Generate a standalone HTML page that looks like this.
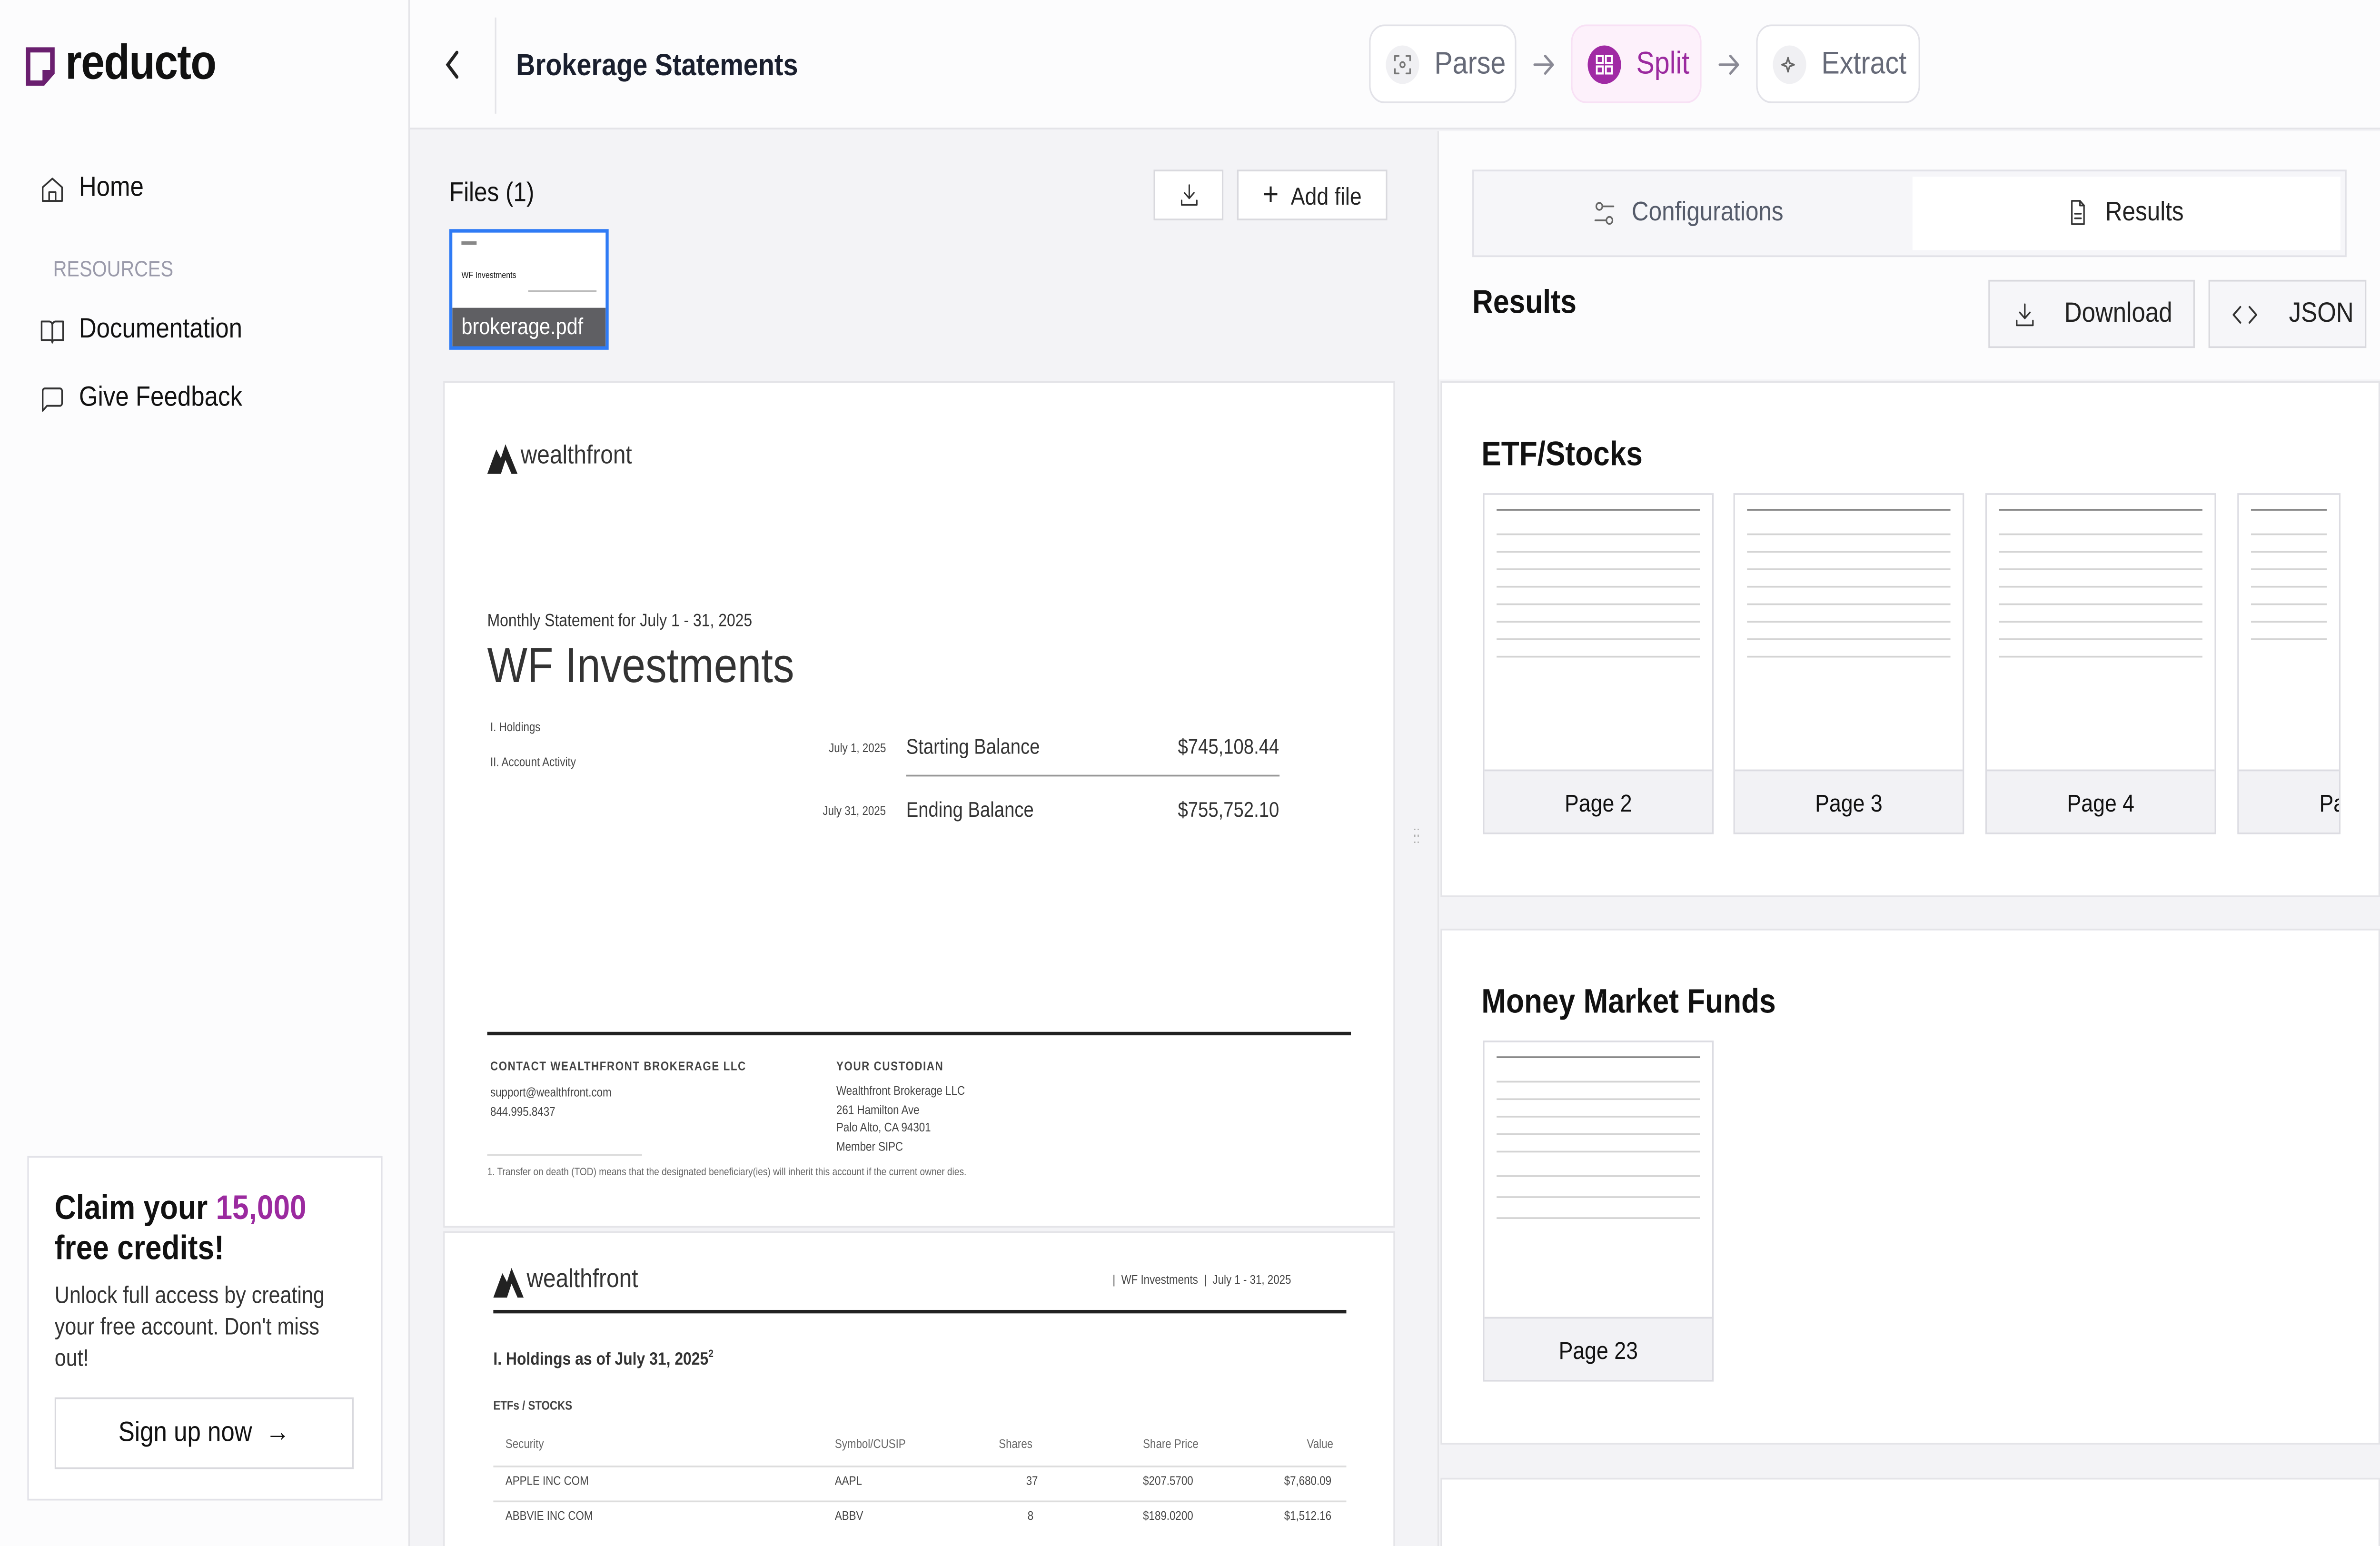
<!DOCTYPE html>
<html><head><meta charset="utf-8"><style>
*{box-sizing:border-box;margin:0;padding:0}
html,body{width:100%;height:100%;overflow:hidden;background:#f3f3f6}
svg.root{display:block;width:100vw;height:100vh}
#w{width:1568px;height:884px;position:relative;overflow:hidden;font-family:"Liberation Sans",Arial,sans-serif;color:#111;background:#f3f3f6}
.a{position:absolute}
.ico{stroke:#333;fill:none;stroke-width:1.5;stroke-linecap:round;stroke-linejoin:round}
.pill{position:absolute;top:14px;height:45px;border:1px solid #e2e2e8;border-radius:10px;background:#fff;display:flex;align-items:center;padding-left:10px;font-size:18px;color:#666a78}
.circ{width:22px;height:22px;border-radius:50%;background:#f0f0f3;display:flex;align-items:center;justify-content:center;margin-right:10px}
.btn{position:absolute;background:#fff;border:1px solid #d9d9de;display:flex;align-items:center;justify-content:center;font-size:14px;color:#222}
.line{position:absolute;height:1px;background:#ddd}
.thumb{position:absolute;width:152px;height:195px;border:1px solid #dcdce2;background:#fff;overflow:hidden}
.thumb .lab{position:absolute;left:0;right:0;bottom:0;height:36px;background:#f2f2f5;border-top:1px solid #dcdce2;text-align:center;line-height:36px;font-size:14px;color:#111}
.tl{position:absolute;height:1px;background:#d4d4d4;left:8px;right:8px}
.sm{font-size:7px;color:#444;white-space:nowrap}
</style></head><body>
<svg class="root" viewBox="0 0 1568 884" preserveAspectRatio="none" xmlns="http://www.w3.org/2000/svg"><foreignObject x="0" y="0" width="1568" height="884"><div xmlns="http://www.w3.org/1999/xhtml" id="w">
<div class="a" style="left:0;top:0;width:270px;height:884px;background:#fcfcfd;border-right:1px solid #e4e4e8">
 <svg class="a" style="left:17px;top:27px" width="20" height="22" viewBox="0 0 20 22"><path d="M1.5 1.5h16v13l-6 6h-10z" fill="none" stroke="#6a1f6f" stroke-width="3"/><path d="M11 20l7-7h-7z" fill="#6a1f6f"/></svg>
 <div class="a" style="left:43px;top:20px;font-size:28px;font-weight:bold;letter-spacing:-0.5px;color:#111">reducto</div>
 <svg class="a ico" style="left:26px;top:100px" width="17" height="17" viewBox="0 0 24 24"><path d="M3 10l9-7 9 7v11H3z"/><path d="M9 21v-7h6v7"/></svg>
 <div class="a" style="left:52px;top:99px;font-size:16px">Home</div>
 <div class="a" style="left:35px;top:147px;font-size:12.5px;color:#9a9aaa">RESOURCES</div>
 <svg class="a ico" style="left:26px;top:181px" width="17" height="17" viewBox="0 0 24 24"><path d="M2 4h7a3 3 0 0 1 3 3v14a2 2 0 0 0-2-2H2z"/><path d="M22 4h-7a3 3 0 0 0-3 3v14a2 2 0 0 1 2-2h8z"/></svg>
 <div class="a" style="left:52px;top:180px;font-size:16px">Documentation</div>
 <svg class="a ico" style="left:26px;top:220px" width="17" height="17" viewBox="0 0 24 24"><path d="M21 15a2 2 0 0 1-2 2H7l-4 4V5a2 2 0 0 1 2-2h14a2 2 0 0 1 2 2z"/></svg>
 <div class="a" style="left:52px;top:219px;font-size:16px">Give Feedback</div>
 <div class="a" style="left:18px;top:661px;width:234px;height:197px;background:#fff;border:1px solid #e2e2e8">
  <div class="a" style="left:17px;top:18px;font-size:19.5px;font-weight:bold;line-height:23px">Claim your <span style="color:#9b2a9f">15,000</span><br/>free credits!</div>
  <div class="a" style="left:17px;top:70px;width:200px;font-size:13.5px;line-height:18px;color:#333">Unlock full access by creating your free account. Don't miss out!</div>
  <div class="a" style="left:17px;top:137px;width:197px;height:41px;border:1px solid #d9d9de;display:flex;align-items:center;justify-content:center;font-size:16px">Sign up now&#160;&#160;→</div>
 </div>
</div>
<div class="a" style="left:270px;top:0;width:1298px;height:74px;background:#fcfcfd;border-bottom:1px solid #e4e4e8">
 <svg class="a" style="left:22px;top:28px" width="12" height="18" viewBox="0 0 12 18"><path d="M9 2L3 9l6 7" fill="none" stroke="#222" stroke-width="2" stroke-linecap="round"/></svg>
 <div class="a" style="left:56px;top:10px;width:1px;height:55px;background:#e4e4e8"></div>
 <div class="a" style="left:70px;top:27px;font-size:17.5px;font-weight:bold;color:#1a1f2e">Brokerage Statements</div>
</div>
<div class="pill" style="left:902px;width:97px"><div class="circ"><svg width="12" height="12" viewBox="0 0 12 12" class="ico" style="stroke:#777;stroke-width:1"><path d="M1 3.5V1h2.5M8.5 1H11v2.5M11 8.5V11H8.5M3.5 11H1V8.5"/><circle cx="6" cy="6" r="1.5"/></svg></div>Parse</div>
<svg class="a ico" style="left:1010px;top:30px;stroke:#8a8a95" width="14" height="14" viewBox="0 0 14 14"><path d="M1 7h12M8 2l5 5-5 5"/></svg>
<div class="pill" style="left:1035px;width:86px;background:#fdf1fb;border-color:#f8e1f5;color:#9b2a9f"><div class="circ" style="background:#a02aa4"><svg width="12" height="12" viewBox="0 0 12 12" fill="none" stroke="#fff" stroke-width="1.2"><rect x="1" y="1" width="4" height="4"/><rect x="7" y="1" width="4" height="4"/><rect x="1" y="7" width="4" height="4"/><rect x="7" y="7" width="4" height="4"/></svg></div>Split</div>
<svg class="a ico" style="left:1132px;top:30px;stroke:#8a8a95" width="14" height="14" viewBox="0 0 14 14"><path d="M1 7h12M8 2l5 5-5 5"/></svg>
<div class="pill" style="left:1157px;width:108px"><div class="circ"><svg width="12" height="12" viewBox="0 0 12 12" class="ico" style="stroke:#666;stroke-width:1"><path d="M5 2l1 3 3 1-3 1-1 3-1-3-3-1 3-1z"/></svg></div>Extract</div>
<div class="a" style="left:296px;top:102px;font-size:15.5px;color:#111">Files (1)</div>
<div class="btn" style="left:760px;top:97px;width:46px;height:29px"><svg width="15" height="15" viewBox="0 0 24 24" class="ico"><path d="M12 3v12M7 10l5 5 5-5M4 17v4h16v-4"/></svg></div>
<div class="btn" style="left:815px;top:97px;width:99px;height:29px"><span style="font-size:18px;margin-right:8px">+</span>Add file</div>
<div class="a" style="left:296px;top:131px;width:105px;height:69px;border:2px solid #2f7bf5;background:#fff;overflow:hidden">
 <div class="a" style="left:6px;top:5px;width:10px;height:2px;background:#888"></div>
 <div class="a" style="left:6px;top:22px;font-size:5px;white-space:nowrap">WF Investments</div>
 <div class="a" style="left:50px;top:33px;width:45px;height:1px;background:#bbb"></div>
 <div class="a" style="left:0;right:0;bottom:0;height:22px;background:#5f5f63;color:#fff;font-size:13px;padding:3px 0 0 6px">brokerage.pdf</div>
</div>
<div class="a" style="left:292px;top:218px;width:627px;height:484px;background:#fff;border:1px solid #e4e4e8">
 <svg class="a" style="left:28px;top:35px" width="20" height="17" viewBox="0 0 20 17"><path d="M0 17L6 3l3 5 3-8 8 17h-4l-4-8-3 8z" fill="#222"/></svg>
 <div class="a" style="left:50px;top:33px;font-size:15px;color:#333">wealthfront</div>
 <div class="a" style="left:28px;top:131px;font-size:10px;color:#333">Monthly Statement for July 1 - 31, 2025</div>
 <div class="a" style="left:28px;top:146px;font-size:28px;color:#333">WF Investments</div>
 <div class="a sm" style="left:30px;top:194px">I. Holdings</div>
 <div class="a sm" style="left:30px;top:214px">II. Account Activity</div>
 <div class="a sm" style="left:253px;top:206px">July 1, 2025</div>
 <div class="a" style="left:304px;top:201px;font-size:12px;color:#333">Starting Balance</div>
 <div class="a" style="left:483px;top:201px;font-size:12px;color:#333">$745,108.44</div>
 <div class="line" style="left:304px;top:224px;width:246px;background:#999"></div>
 <div class="a sm" style="left:249px;top:242px">July 31, 2025</div>
 <div class="a" style="left:304px;top:237px;font-size:12px;color:#333">Ending Balance</div>
 <div class="a" style="left:483px;top:237px;font-size:12px;color:#333">$755,752.10</div>
 <div class="line" style="left:28px;top:371px;width:569px;height:2px;background:#222"></div>
 <div class="a sm" style="left:30px;top:388px;font-weight:bold;letter-spacing:.5px">CONTACT WEALTHFRONT BROKERAGE LLC</div>
 <div class="a sm" style="left:30px;top:401px;line-height:11px">support@wealthfront.com<br/>844.995.8437</div>
 <div class="a sm" style="left:258px;top:388px;font-weight:bold;letter-spacing:.5px">YOUR CUSTODIAN</div>
 <div class="a sm" style="left:258px;top:401px;line-height:10.5px">Wealthfront Brokerage LLC<br/>261 Hamilton Ave<br/>Palo Alto, CA 94301<br/>Member SIPC</div>
 <div class="line" style="left:28px;top:441px;width:102px"></div>
 <div class="a" style="left:28px;top:449px;font-size:6px;color:#666;white-space:nowrap">1. Transfer on death (TOD) means that the designated beneficiary(ies) will inherit this account if the current owner dies.</div>
</div>
<div class="a" style="left:292px;top:704px;width:627px;height:190px;background:#fff;border:1px solid #e4e4e8">
 <svg class="a" style="left:32px;top:20px" width="20" height="17" viewBox="0 0 20 17"><path d="M0 17L6 3l3 5 3-8 8 17h-4l-4-8-3 8z" fill="#222"/></svg>
 <div class="a" style="left:54px;top:18px;font-size:15px;color:#333">wealthfront</div>
 <div class="a sm" style="left:440px;top:24px">|&#160; WF Investments &#160;|&#160; July 1 - 31, 2025</div>
 <div class="line" style="left:32px;top:44px;width:562px;height:2px;background:#222"></div>
 <div class="a" style="left:32px;top:67px;font-size:10px;font-weight:bold;color:#333">I. Holdings as of July 31, 2025<sup style="font-size:6px">2</sup></div>
 <div class="a sm" style="left:32px;top:96px;font-weight:bold">ETFs / STOCKS</div>
 <div class="a sm" style="left:40px;top:118px;color:#666">Security</div><div class="a sm" style="left:257px;top:118px;color:#666">Symbol/CUSIP</div><div class="a sm" style="left:365px;top:118px;color:#666">Shares</div><div class="a sm" style="left:460px;top:118px;color:#666">Share Price</div><div class="a sm" style="left:568px;top:118px;color:#666">Value</div>
 <div class="line" style="left:32px;top:133px;width:562px"></div>
 <div class="a sm" style="left:40px;top:139px">APPLE INC COM</div><div class="a sm" style="left:257px;top:139px">AAPL</div><div class="a sm" style="left:383px;top:139px">37</div><div class="a sm" style="left:460px;top:139px">$207.5700</div><div class="a sm" style="left:553px;top:139px">$7,680.09</div>
 <div class="line" style="left:32px;top:153px;width:562px"></div>
 <div class="a sm" style="left:40px;top:159px">ABBVIE INC COM</div><div class="a sm" style="left:257px;top:159px">ABBV</div><div class="a sm" style="left:384px;top:159px">8</div><div class="a sm" style="left:460px;top:159px">$189.0200</div><div class="a sm" style="left:553px;top:159px">$1,512.16</div>
</div>
<div class="a" style="left:931px;top:474px;font-size:8px;color:#aaa;line-height:4px">::<br/>::</div>
<div class="a" style="left:947px;top:75px;width:621px;height:809px;background:#f3f3f6;border-left:1px solid #e4e4e8"></div>
<div class="a" style="left:948px;top:75px;width:620px;height:142px;background:#fcfcfd"></div>
<div class="a" style="left:970px;top:97px;width:576px;height:50px;border:1px solid #e2e2e8;background:#f6f6f9">
 <div class="a" style="left:289px;top:3px;width:282px;height:42px;background:#fff"></div>
 <svg class="a ico" style="left:78px;top:16px;stroke:#666" width="16" height="16" viewBox="0 0 24 24"><circle cx="7" cy="6" r="3"/><path d="M10 6h11M3 18h11"/><circle cx="17" cy="18" r="3"/></svg>
 <div class="a" style="left:104px;top:15px;font-size:15.5px;color:#555b6a">Configurations</div>
 <svg class="a ico" style="left:390px;top:15px" width="16" height="17" viewBox="0 0 24 24"><path d="M14 2H6v20h12V6z"/><path d="M14 2v4h4M9 13h6M9 17h6"/></svg>
 <div class="a" style="left:416px;top:15px;font-size:15.5px;color:#222">Results</div>
</div>
<div class="a" style="left:970px;top:163px;font-size:19px;font-weight:bold">Results</div>
<div class="btn" style="left:1310px;top:160px;width:136px;height:39px;background:#f6f6f9;font-size:16px;justify-content:flex-start;padding-left:15px"><svg width="16" height="16" viewBox="0 0 24 24" class="ico" style="margin-right:18px"><path d="M12 3v12M7 10l5 5 5-5M4 17v4h16v-4"/></svg>Download</div>
<div class="btn" style="left:1455px;top:160px;width:104px;height:39px;background:#f6f6f9;font-size:16px;justify-content:flex-start;padding-left:14px"><svg width="18" height="14" viewBox="0 0 24 18" class="ico" style="margin-right:20px"><path d="M8 3L2 9l6 6M16 3l6 6-6 6"/></svg>JSON</div>
<div class="a" style="left:949px;top:218px;width:619px;height:295px;background:#fff;border:1px solid #e4e4e8;overflow:hidden">
 <div class="a" style="left:26px;top:30px;font-size:19.5px;font-weight:bold">ETF/Stocks</div>
 <div class="thumb" style="left:27px;top:63px"><div class="tl" style="top:8px;background:#888"></div><div class="tl" style="top:22px"></div><div class="tl" style="top:32px"></div><div class="tl" style="top:42px"></div><div class="tl" style="top:52px"></div><div class="tl" style="top:62px"></div><div class="tl" style="top:72px"></div><div class="tl" style="top:82px"></div><div class="tl" style="top:92px"></div><div class="lab">Page 2</div></div>
 <div class="thumb" style="left:192px;top:63px"><div class="tl" style="top:8px;background:#888"></div><div class="tl" style="top:22px"></div><div class="tl" style="top:32px"></div><div class="tl" style="top:42px"></div><div class="tl" style="top:52px"></div><div class="tl" style="top:62px"></div><div class="tl" style="top:72px"></div><div class="tl" style="top:82px"></div><div class="tl" style="top:92px"></div><div class="lab">Page 3</div></div>
 <div class="thumb" style="left:358px;top:63px"><div class="tl" style="top:8px;background:#888"></div><div class="tl" style="top:22px"></div><div class="tl" style="top:32px"></div><div class="tl" style="top:42px"></div><div class="tl" style="top:52px"></div><div class="tl" style="top:62px"></div><div class="tl" style="top:72px"></div><div class="tl" style="top:82px"></div><div class="tl" style="top:92px"></div><div class="lab">Page 4</div></div>
 <div class="thumb" style="left:524px;top:63px;width:68px"><div class="tl" style="top:8px;background:#888"></div><div class="tl" style="top:22px"></div><div class="tl" style="top:32px"></div><div class="tl" style="top:42px"></div><div class="tl" style="top:52px"></div><div class="tl" style="top:62px"></div><div class="tl" style="top:72px"></div><div class="tl" style="top:82px"></div><div class="lab" style="text-align:left;padding-left:53px;width:152px">Page 5</div></div>
</div>
<div class="a" style="left:949px;top:531px;width:619px;height:295px;background:#fff;border:1px solid #e4e4e8">
 <div class="a" style="left:26px;top:30px;font-size:19.5px;font-weight:bold">Money Market Funds</div>
 <div class="thumb" style="left:27px;top:63px"><div class="tl" style="top:8px;background:#888"></div><div class="tl" style="top:22px"></div><div class="tl" style="top:32px"></div><div class="tl" style="top:42px"></div><div class="tl" style="top:52px"></div><div class="tl" style="top:62px"></div><div class="tl" style="top:76px"></div><div class="tl" style="top:88px"></div><div class="tl" style="top:100px"></div><div class="lab">Page 23</div></div>
</div>
<div class="a" style="left:949px;top:845px;width:619px;height:50px;background:#fff;border:1px solid #e4e4e8"></div>
</div></foreignObject></svg>
</body></html>
